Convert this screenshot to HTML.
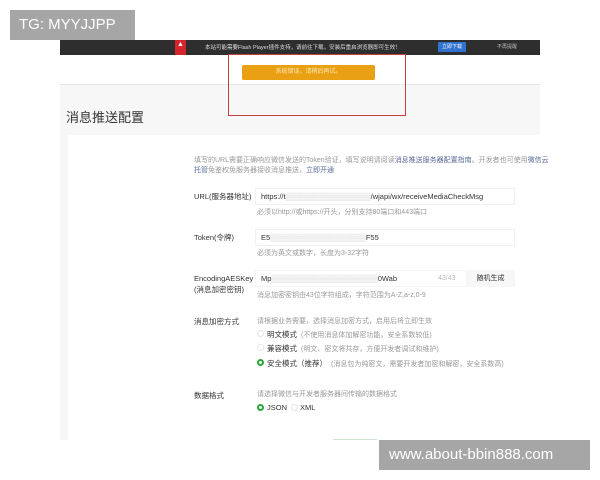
<!DOCTYPE html>
<html><head><meta charset="utf-8"><style>
*{margin:0;padding:0;box-sizing:border-box}
body{width:600px;height:480px;background:#fff;position:relative;overflow:hidden;font-family:"Liberation Sans","Noto Sans CJK SC",sans-serif;color:#444}
.a{position:absolute}
.s{font-size:7px;color:#999;white-space:nowrap}
.l{font-size:7.5px;color:#333;white-space:nowrap}
.inp{border:1px solid #f0f0f0;background:#fff;height:17px;font-size:7.5px;color:#333;padding:3px 5px;white-space:nowrap}
.r{width:7px;height:7px;border-radius:50%;border:1px solid #e4e4e4}
.rg{width:7px;height:7px;border-radius:50%;border:2px solid #2aa53a}
</style></head><body>
<div class="a" style="left:60px;top:85px;width:480px;height:355px;background:#f7f7f8"></div>
<div class="a" style="left:68px;top:135px;width:480px;height:305px;background:#fff"></div>
<div class="a" style="left:60px;top:84px;width:480px;height:1px;background:#e6e6e6"></div>
<div class="a" style="left:60px;top:40px;width:480px;height:15px;background:#2e2e2e"></div>
<div class="a" style="left:175px;top:40px;width:11px;height:15px;background:#d6242c;color:#fff;font-size:7px;text-align:center;line-height:10px">▲</div>
<div class="a" style="left:205px;top:43px;font-size:5.5px;color:#ddd;white-space:nowrap">本站可能需要Flash Player插件支持，请前往下载，安装后重启浏览器即可生效！</div>
<div class="a" style="left:438px;top:42px;width:28px;height:10px;background:#2f72d0;color:#fff;font-size:5px;text-align:center;line-height:10px">立即下载</div>
<div class="a" style="left:497px;top:43px;font-size:5px;color:#bbb">不再提醒</div>
<div class="a" style="left:242px;top:65px;width:133px;height:15px;background:#e9a012;border-radius:2px;color:#fde8b8;font-size:6px;text-align:center;line-height:15px">系统错误，请稍后再试。</div>
<div class="a" style="left:228px;top:54px;width:178px;height:62px;border:1.5px solid #c4403f"></div>
<div class="a" style="left:66px;top:107px;font-size:13px;color:#333">消息推送配置</div>
<div class="a s" style="left:194px;top:156px;line-height:10px">填写的URL需要正确响应微信发送的Token验证，填写说明请阅读<span style="color:#5a6a9a">消息推送服务器配置指南</span>。开发者也可使用<span style="color:#5a6a9a">微信云</span><br><span style="color:#5a6a9a">托管</span>免鉴权免服务器接收消息推送，<span style="color:#5a6a9a">立即开通</span></div>
<div class="a l" style="left:194px;top:191px">URL(服务器地址)</div>
<div class="a inp" style="left:255px;top:188px;width:260px">https://t<span style="color:#ccc">▒▒▒▒▒▒▒▒▒▒▒▒▒▒▒▒</span>/wjapi/wx/receiveMediaCheckMsg</div>
<div class="a s" style="left:257px;top:207px">必须以http://或https://开头，分别支持80端口和443端口</div>
<div class="a l" style="left:194px;top:232px">Token(令牌)</div>
<div class="a inp" style="left:255px;top:229px;width:260px">E5<span style="color:#ccc">▒▒▒▒▒▒▒▒▒▒▒▒▒▒▒▒▒▒</span>F55</div>
<div class="a s" style="left:257px;top:248px">必须为英文或数字，长度为3-32字符</div>
<div class="a l" style="left:194px;top:273px;line-height:11px">EncodingAESKey<br>(消息加密密钥)</div>
<div class="a inp" style="left:255px;top:270px;width:260px;border-color:#f5f5f5">Mp<span style="color:#ccc">▒▒▒▒▒▒▒▒▒▒▒▒▒▒▒▒▒▒▒▒</span>0Wab</div>
<div class="a s" style="left:438px;top:275px;color:#bbb">43/43</div>
<div class="a" style="left:466px;top:270px;width:49px;height:17px;background:#f7f7f7;font-size:7px;color:#333;text-align:center;line-height:17px">随机生成</div>
<div class="a s" style="left:257px;top:290px">消息加密密钥由43位字符组成，字符范围为A-Z,a-z,0-9</div>
<div class="a l" style="left:194px;top:316px">消息加密方式</div>
<div class="a s" style="left:257px;top:316px">请根据业务需要，选择消息加密方式，启用后将立即生效</div>
<div class="a r" style="left:257px;top:330px"></div><div class="a l" style="left:267px;top:329px">明文模式 <span class="s">&nbsp;(不使用消息体加解密功能，安全系数较低)</span></div>
<div class="a r" style="left:257px;top:344px"></div><div class="a l" style="left:267px;top:343px">兼容模式 <span class="s">&nbsp;(明文、密文将共存，方便开发者调试和维护)</span></div>
<div class="a rg" style="left:257px;top:359px"></div><div class="a l" style="left:267px;top:358px">安全模式（推荐） <span class="s">&nbsp;(消息包为纯密文，需要开发者加密和解密，安全系数高)</span></div>
<div class="a l" style="left:194px;top:390px">数据格式</div>
<div class="a s" style="left:257px;top:389px">请选择微信与开发者服务器间传输的数据格式</div>
<div class="a rg" style="left:257px;top:404px"></div><div class="a l" style="left:267px;top:403px">JSON</div>
<div class="a r" style="left:291px;top:404px"></div><div class="a l" style="left:300px;top:403px">XML</div>
<div class="a" style="left:333px;top:439px;width:44px;height:1px;background:#cfe5d2"></div>
<div class="a" style="left:10px;top:10px;width:125px;height:30px;background:#a6a6a6;color:#fff;font-size:15px;line-height:30px;padding-left:9px">TG: MYYJJPP</div>
<div class="a" style="left:379px;top:440px;width:211px;height:30px;background:#a6a6a6;color:#fff;font-size:15px;line-height:30px;padding-left:10px">www.about-bbin888.com</div>
</body></html>
